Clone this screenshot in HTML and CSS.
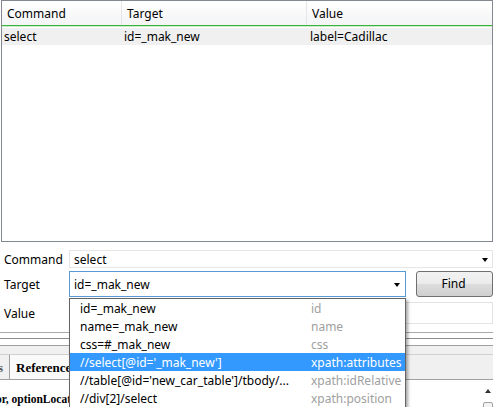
FILE: index.html
```html
<!DOCTYPE html>
<html>
<head>
<meta charset="utf-8">
<link rel="stylesheet" href="styles.css">
</head>
<body>
<div class="app">
  <div class="grid">
    <div class="grid-head">
      <div class="cell c1">Command</div>
      <div class="cell c2">Target</div>
      <div class="cell c3">Value</div>
    </div>
    <div class="grid-row">
      <div class="cell c1">select</div>
      <div class="cell c2">id=_mak_new</div>
      <div class="cell c3">label=Cadillac</div>
    </div>
  </div>

  <div class="form">
    <div class="frow">
      <div class="flabel">Command</div>
      <div class="combo cmd"><span class="ctext">select</span><span class="arrow"></span></div>
    </div>
    <div class="frow target">
      <div class="flabel">Target</div>
      <div class="combo tgt"><span class="ctext">id=_mak_new</span><span class="arrow"></span></div>
      <button class="find">Find</button>
    </div>
    <div class="frow value">
      <div class="flabel">Value</div>
      <div class="vinput"></div>
    </div>
  </div>

  <div class="bottom">
    <div class="line l1"></div>
    <div class="line l2"></div>
    <div class="tabband"></div>
    <div class="tabstrip">
      <div class="tab side">s</div>
      <div class="tab active">Reference</div>
    </div>
    <div class="content">
      <div class="ref-text">or, optionLocator)</div>
      <div class="vscroll">
        <div class="sbtn"><span class="uparrow"></span></div>
        <div class="thumb"></div>
      </div>
    </div>
  </div>

  <div class="dropdown">
    <div class="ditem"><span class="dl">id=_mak_new</span><span class="dr">id</span></div>
    <div class="ditem"><span class="dl">name=_mak_new</span><span class="dr">name</span></div>
    <div class="ditem"><span class="dl">css=#_mak_new</span><span class="dr">css</span></div>
    <div class="ditem sel"><span class="dl">//select[@id='_mak_new']</span><span class="dr">xpath:attributes</span></div>
    <div class="ditem"><span class="dl">//table[@id='new_car_table']/tbody/...</span><span class="dr">xpath:idRelative</span></div>
    <div class="ditem"><span class="dl">//div[2]/select</span><span class="dr">xpath:position</span></div>
  </div>
</div>
</body>
</html>
```

FILE: styles.css
```css
* { box-sizing: border-box; }
html, body { margin: 0; padding: 0; background: #fff; }
body {
  width: 501px;
  height: 407px;
  overflow: hidden;
  font-family: "Noto Sans", "Open Sans", sans-serif;
  font-size: 12px;
  color: #000;
}
.app { position: relative; width: 501px; height: 407px; }

/* command grid */
.grid {
  margin-left: 1px;
  width: 492px;
  height: 242px;
  border: 1px solid #828790;
  background: #fff;
}
.grid-head {
  display: flex;
  height: 25px;
  background: linear-gradient(#ffffff, #f3f4f6);
  border-bottom: 1px solid #3cb43c;
  box-shadow: 0 1px 0 #c8eac8;
}
.grid-head .cell {
  line-height: 26px;
  padding-left: 5px;
  border-right: 1px solid #e3e5e8;
}
.grid-row {
  display: flex;
  margin-top: 2px;
  height: 17px;
  background: #f0f0f0;
}
.grid-row .cell { line-height: 18px; padding-left: 2px; }
.cell { white-space: nowrap; overflow: hidden; }
.c1 { width: 120px; }
.c2 { width: 185px; }
.c3 { flex: 1; border-right: none !important; }
.grid-row .c1 { padding-left: 2px; }
.grid-row .c2 { padding-left: 2px; }
.grid-row .c3 { padding-left: 3px; }

/* form */
.form { margin-top: 8px; }
.frow { display: flex; align-items: center; }
.flabel { width: 69px; padding-left: 4px; }
.combo {
  position: relative;
  display: flex;
  align-items: center;
  background: #fff;
}
.combo.cmd {
  width: 424px;
  height: 18px;
  border: 1px solid #e6e6e6;
}
.combo .ctext { padding-left: 4px; }
.arrow {
  position: absolute;
  width: 0; height: 0;
  border-left: 3.5px solid transparent;
  border-right: 3.5px solid transparent;
  border-top: 4px solid #000;
}
.combo.cmd .arrow { right: 4px; top: 7px; }
.frow.target { margin-top: 3px; height: 26px; }
.combo.tgt {
  width: 337px;
  height: 26px;
  border: 1px solid #5b9bd5;
}
.combo.tgt .arrow { right: 5px; top: 11px; }
.find {
  margin-left: 10px;
  width: 77px;
  height: 26px;
  margin-top: -1px;
  border: 1px solid #707070;
  border-radius: 3px;
  background: linear-gradient(#f2f2f2 0%, #ebebeb 50%, #dddddd 51%, #cfcfcf 100%);
  font-family: inherit;
  font-size: 12px;
  color: #000;
  padding: 0 2px 0 0;
}
.frow.value { margin-top: 5px; height: 22px; }
.vinput {
  width: 424px;
  height: 22px;
  border: 1px solid #e3e3e3;
  background: #fff;
}

/* bottom panel */
.bottom { margin-top: 8px; width: 493px; }
.line { height: 1px; }
.l1 { background: #a9a9a9; }
.l2 { margin-top: 5px; background: #8c8c8c; }
.tabband {
  margin-top: 6px;
  height: 9px;
  border-top: 1px solid #a0a0a0;
  background: #f0f0f0;
}
.tabstrip {
  display: flex;
  height: 26px;
  background: #f0f0f0;
  border-top: 1px solid #d0d0d0;
  border-bottom: 1px solid #a0a0a0;
}
.tab {
  font-family: "Liberation Serif", serif;
  font-weight: bold;
  font-size: 13px;
  line-height: 26px;
  white-space: nowrap;
  overflow: hidden;
}
.tab.side {
  width: 10px;
  text-indent: -2px;
  color: #555;
  border-right: 1px solid #a0a0a0;
}
.tab.active {
  padding-left: 6px;
  width: 90px;
  background: #fafafa;
  border-right: 1px solid #a0a0a0;
}
.content {
  display: flex;
  justify-content: space-between;
  height: 30px;
  background: #fff;
}
.ref-text {
  font-family: "Liberation Serif", serif;
  font-weight: bold;
  font-size: 11.5px;
  line-height: 14px;
  margin-top: 12px;
  text-indent: -4px;
  white-space: nowrap;
}
.vscroll {
  width: 10px;
  display: flex;
  flex-direction: column;
}
.sbtn {
  height: 22px;
  display: flex;
  align-items: center;
  justify-content: center;
}
.uparrow {
  width: 0; height: 0;
  border-left: 3px solid transparent;
  border-right: 3px solid transparent;
  border-bottom: 4px solid #333;
}
.thumb {
  flex: 1;
  border: 1px solid #a0a0a0;
  border-radius: 2px;
  background: #f4f4f4;
}

/* dropdown overlay */
.dropdown {
  position: absolute;
  left: 69px;
  top: 298px;
  width: 337px;
  height: 112px;
  border: 1px solid #646464;
  background: #fff;
  box-shadow: 2px 2px 3px rgba(0,0,0,0.35);
}
.ditem {
  display: flex;
  height: 18px;
  line-height: 19px;
  white-space: nowrap;
}
.ditem .dl { width: 241px; padding-left: 10px; overflow: hidden; }
.ditem .dr { color: #a0a0a0; }
.ditem.sel { background: #3399ff; color: #fff; }
.ditem.sel .dr { color: #fff; }
```
